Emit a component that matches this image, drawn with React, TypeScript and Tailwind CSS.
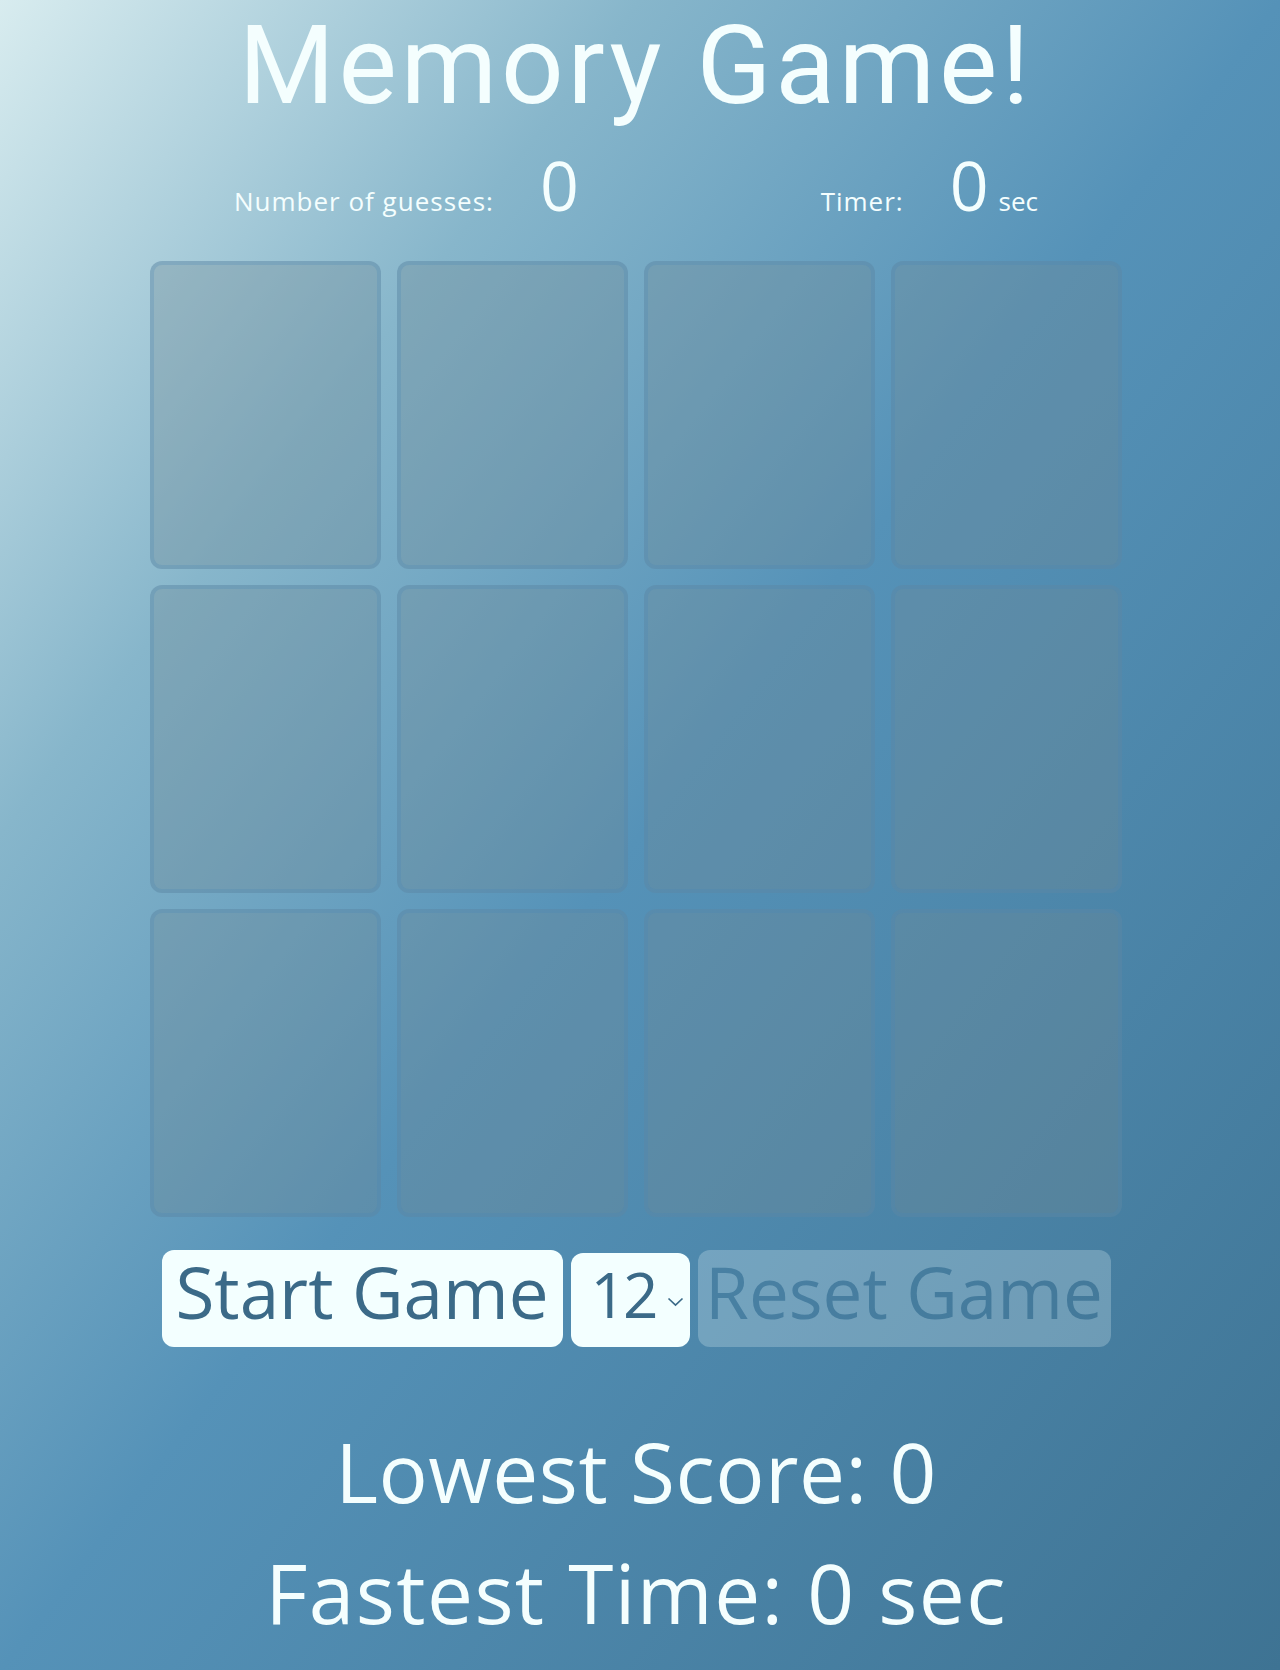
import { useState } from "react";

const cards = Array.from({ length: 12 }, (_, i) => i);

export default function App() {
  const [size, setSize] = useState("12");

  return (
    <div className="min-h-[1670px] w-full bg-[linear-gradient(to_bottom_right,#d8ecef_0%,#87b6cb_25%,#5592b8_50%,#3e7393_100%)] font-['Open_Sans',sans-serif] text-[#f4fefe] pr-2">
      <div className="flex flex-col items-center">
        <h1 className="mt-[11px] font-['Roboto',sans-serif] text-[110px] leading-none font-normal tracking-[3.8px]">Memory Game!</h1>

        <div className="mt-[30px] flex w-[804px] items-baseline justify-between">
          <div className="flex items-baseline">
            <span className="text-[26px] leading-none tracking-[1px]">Number of guesses:</span>
            <span className="ml-[46px] text-[68px] leading-none">0</span>
          </div>
          <div className="flex items-baseline">
            <span className="text-[26px] leading-none tracking-[1px]">Timer:</span>
            <span className="ml-[46px] text-[68px] leading-none">0</span>
            <span className="ml-[10px] text-[26px] leading-none">sec</span>
          </div>
        </div>

        <div className="mt-[42px] grid grid-cols-[repeat(4,231px)] grid-rows-[repeat(3,308px)] gap-4">
          {cards.map((c) => (
            <div
              key={c}
              className="rounded-xl border-4 border-[#4682b4]/25 bg-[#708a96]/35"
            />
          ))}
        </div>

        <div className="mt-[33px] flex items-end gap-2">
          <button className="flex h-[97px] w-[401px] items-start justify-center rounded-xl bg-[#f3ffff] pt-[6px] text-[71px] leading-none text-[#3b6a88]">
            Start Game
          </button>
          <div className="relative h-[94px] w-[119px] rounded-xl bg-[#f3ffff] text-[#3b6a88]">
            <select
              value={size}
              onChange={(e) => setSize(e.target.value)}
              className="h-full w-full appearance-none bg-transparent pb-[12px] pl-[20px] text-[62px] leading-none tracking-[-3px] outline-none"
            >
              <option value="12">12</option>
              <option value="16">16</option>
              <option value="20">20</option>
            </select>
            <svg
              className="pointer-events-none absolute left-[96px] top-[44px]"
              width="17"
              height="10"
              viewBox="0 0 17 10"
              fill="none"
            >
              <path d="M1.5 1.5 L8.5 8 L15.5 1.5" stroke="#3b6a88" strokeWidth="1.7" />
            </svg>
          </div>
          <button
            disabled
            className="flex h-[97px] w-[413px] items-start justify-center rounded-xl bg-[#f3ffff] pt-[6px] text-[71px] leading-none text-[#3b6a88] opacity-[0.23]"
          >
            Reset Game
          </button>
        </div>

        <h2 className="mt-[83px] text-[82px] leading-none tracking-[0.5px]">Lowest Score: 0</h2>
        <h2 className="mt-[39px] text-[82px] leading-none tracking-[1.4px]">Fastest Time: 0 sec</h2>
      </div>
    </div>
  );
}
